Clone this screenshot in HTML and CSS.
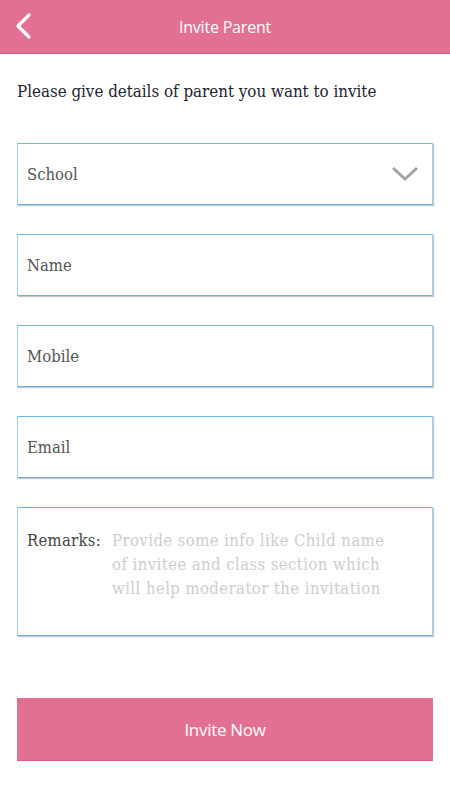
FILE: index.html
```html
<!DOCTYPE html>
<html>
<head>
<meta charset="utf-8">
<link rel="stylesheet" href="styles.css">
</head>
<body>
<header class="topbar">
  <svg class="back" width="20" height="30" viewBox="0 0 20 30"><path d="M15 3 L4 14 L15 25" fill="none" stroke="#fff" stroke-width="3.2" stroke-linecap="round" stroke-linejoin="round"/></svg>
  <h1 class="title">Invite Parent</h1>
</header>
<main class="content">
  <p class="intro">Please give details of parent you want to invite</p>
  <div class="form">
    <div class="field select">
      <span class="label">School</span>
      <svg class="chev" width="28" height="16" viewBox="0 0 28 16"><path d="M2 2 L14 13 L26 2" fill="none" stroke="#a3a3a3" stroke-width="3"/></svg>
    </div>
    <div class="field"><span class="label">Name</span></div>
    <div class="field"><span class="label">Mobile</span></div>
    <div class="field"><span class="label">Email</span></div>
    <div class="field remarks">
      <span class="label">Remarks:</span>
      <span class="placeholder">Provide some info like Child name<br>of invitee and class section which<br>will help moderator the invitation</span>
    </div>
  </div>
  <button class="invite">Invite Now</button>
</main>
</body>
</html>
```
FILE: styles.css
```css
* { box-sizing: border-box; }
body {
  margin: 0;
  background: #fff;
  font-family: "DejaVu Serif", serif;
}
.topbar {
  height: 54px;
  background: #e27093;
  border-bottom: 1px solid #d95c84;
  display: flex;
  align-items: center;
  justify-content: center;
  position: relative;
}
.back {
  position: absolute;
  left: 14px;
  top: 12px;
}
.title {
  margin: 0;
  font-family: "Open Sans", sans-serif;
  font-weight: 400;
  font-size: 16px;
  color: #fff;
  letter-spacing: -0.2px;
}
.content {
  padding: 0 17px;
}
.intro {
  margin: 27px 0 0;
  line-height: 20px;
  font-size: 16.8px;
  font-stretch: condensed;
  color: #1d2330;
}
.form {
  margin-top: 42px;
  display: flex;
  flex-direction: column;
  gap: 29px;
}
.field {
  height: 62px;
  border: 1px solid #9fd2f2;
  border-top-color: #6cb8e6;
  border-bottom-color: #6cb0de;
  box-shadow: 1px 1px 1px rgba(0,0,0,0.22);
  display: flex;
  align-items: center;
  padding: 0 9px;
}
.label {
  font-size: 16.5px;
  font-stretch: condensed;
  color: #555;
}
.select { justify-content: space-between; }
.chev { margin-right: 4px; }
.remarks {
  height: 129px;
  align-items: flex-start;
  padding-top: 21px;
  line-height: 24px;
}
.remarks .label { color: #444; flex: none; width: 85px; letter-spacing: 0.3px; }
.placeholder {
  font-size: 16.5px;
  font-stretch: condensed;
  color: #cdcdcd;
  white-space: nowrap;
  letter-spacing: 0.45px;
}
.invite {
  display: block;
  width: 100%;
  height: 63px;
  margin-top: 62px;
  background: #e27093;
  border: none;
  border-bottom: 1px solid #d95c84;
  color: #fff;
  font-family: "Open Sans", sans-serif;
  font-size: 17px;
  letter-spacing: -0.3px;
}
```
